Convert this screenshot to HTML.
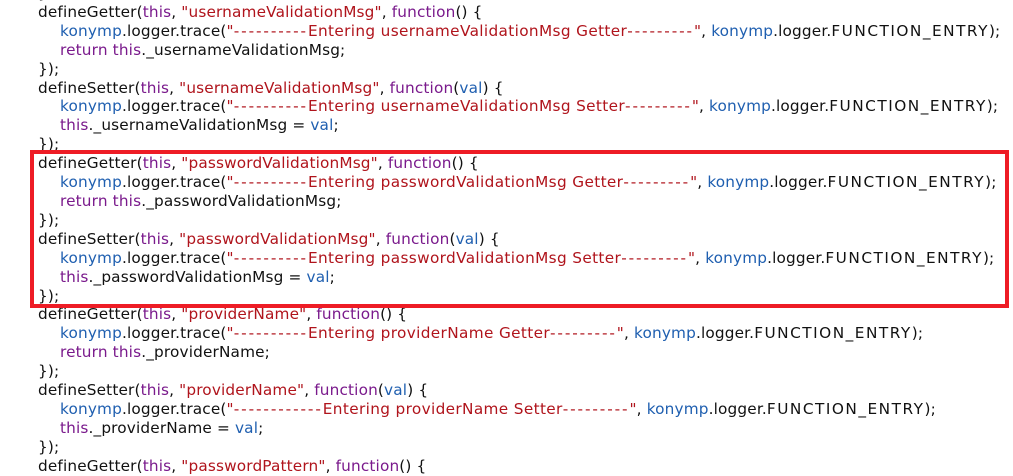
<!DOCTYPE html>
<html><head><meta charset="utf-8"><style>
html,body{margin:0;padding:0;background:#fff;width:1013px;height:461px;overflow:hidden}
#c{position:absolute;left:38px;top:-16px;font-family:"DejaVu Sans","Liberation Sans",sans-serif;font-size:15.3px;line-height:18.9px;color:#111;white-space:pre;letter-spacing:0.15px}
.i{padding-left:22px}
.k{color:#7a1a8c}.s{color:#b0141c}.b{color:#1f5fb0}
.d{letter-spacing:1.9px}
.f{letter-spacing:1.5px}
.e{letter-spacing:0.35px}
#box{position:absolute;left:30px;top:150px;width:971px;height:150px;border:4px solid #ee1c25}
</style></head><body>
<div id="c"><div>});</div><div>defineGetter(<span class="k">this</span>, <span class="s">"usernameValidationMsg"</span>, <span class="k">function</span>() {</div><div class="i"><span class="b">konymp</span>.logger.trace(<span class="s">"<span class="d">----------</span><span class="e">Entering usernameValidationMsg Getter</span><span class="d">---------</span>"</span>, <span class="b">konymp</span>.logger.<span class="f">FUNCTION_ENTRY</span>);</div><div class="i"><span class="k">return this</span>._usernameValidationMsg;</div><div>});</div><div>defineSetter(<span class="k">this</span>, <span class="s">"usernameValidationMsg"</span>, <span class="k">function</span>(<span class="b">val</span>) {</div><div class="i"><span class="b">konymp</span>.logger.trace(<span class="s">"<span class="d">----------</span><span class="e">Entering usernameValidationMsg Setter</span><span class="d">---------</span>"</span>, <span class="b">konymp</span>.logger.<span class="f">FUNCTION_ENTRY</span>);</div><div class="i"><span class="k">this</span>._usernameValidationMsg = <span class="b">val</span>;</div><div>});</div><div>defineGetter(<span class="k">this</span>, <span class="s">"passwordValidationMsg"</span>, <span class="k">function</span>() {</div><div class="i"><span class="b">konymp</span>.logger.trace(<span class="s">"<span class="d">----------</span><span class="e">Entering passwordValidationMsg Getter</span><span class="d">---------</span>"</span>, <span class="b">konymp</span>.logger.<span class="f">FUNCTION_ENTRY</span>);</div><div class="i"><span class="k">return this</span>._passwordValidationMsg;</div><div>});</div><div>defineSetter(<span class="k">this</span>, <span class="s">"passwordValidationMsg"</span>, <span class="k">function</span>(<span class="b">val</span>) {</div><div class="i"><span class="b">konymp</span>.logger.trace(<span class="s">"<span class="d">----------</span><span class="e">Entering passwordValidationMsg Setter</span><span class="d">---------</span>"</span>, <span class="b">konymp</span>.logger.<span class="f">FUNCTION_ENTRY</span>);</div><div class="i"><span class="k">this</span>._passwordValidationMsg = <span class="b">val</span>;</div><div>});</div><div>defineGetter(<span class="k">this</span>, <span class="s">"providerName"</span>, <span class="k">function</span>() {</div><div class="i"><span class="b">konymp</span>.logger.trace(<span class="s">"<span class="d">----------</span><span class="e">Entering providerName Getter</span><span class="d">---------</span>"</span>, <span class="b">konymp</span>.logger.<span class="f">FUNCTION_ENTRY</span>);</div><div class="i"><span class="k">return this</span>._providerName;</div><div>});</div><div>defineSetter(<span class="k">this</span>, <span class="s">"providerName"</span>, <span class="k">function</span>(<span class="b">val</span>) {</div><div class="i"><span class="b">konymp</span>.logger.trace(<span class="s">"<span class="d">------------</span><span class="e">Entering providerName Setter</span><span class="d">---------</span>"</span>, <span class="b">konymp</span>.logger.<span class="f">FUNCTION_ENTRY</span>);</div><div class="i"><span class="k">this</span>._providerName = <span class="b">val</span>;</div><div>});</div><div>defineGetter(<span class="k">this</span>, <span class="s">"passwordPattern"</span>, <span class="k">function</span>() {</div></div>
<div id="box"></div>
</body></html>
